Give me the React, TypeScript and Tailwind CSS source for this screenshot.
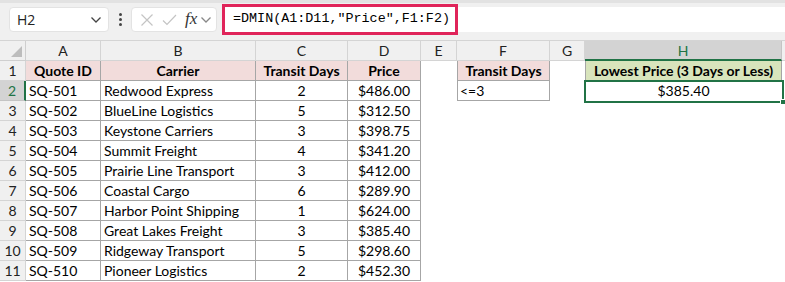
import React from 'react';

type Row = { id: string; carrier: string; days: string; price: string };

const rows: Row[] = [
  { id: 'SQ-501', carrier: 'Redwood Express', days: '2', price: '$486.00' },
  { id: 'SQ-502', carrier: 'BlueLine Logistics', days: '5', price: '$312.50' },
  { id: 'SQ-503', carrier: 'Keystone Carriers', days: '3', price: '$398.75' },
  { id: 'SQ-504', carrier: 'Summit Freight', days: '4', price: '$341.20' },
  { id: 'SQ-505', carrier: 'Prairie Line Transport', days: '3', price: '$412.00' },
  { id: 'SQ-506', carrier: 'Coastal Cargo', days: '6', price: '$289.90' },
  { id: 'SQ-507', carrier: 'Harbor Point Shipping', days: '1', price: '$624.00' },
  { id: 'SQ-508', carrier: 'Great Lakes Freight', days: '3', price: '$385.40' },
  { id: 'SQ-509', carrier: 'Ridgeway Transport', days: '5', price: '$298.60' },
  { id: 'SQ-510', carrier: 'Pioneer Logistics', days: '2', price: '$452.30' },
];

const cols = ['A', 'B', 'C', 'D', 'E', 'F', 'G', 'H'];

const cell = 'h-[20px] flex items-center text-[14px] leading-none text-black';
const tb = 'border-r border-b border-[#a6a6a6]';

const Chevron: React.FC<{ className?: string }> = ({ className }) => (
  <svg className={className} width="12" height="8" viewBox="0 0 12 8" fill="none">
    <path d="M1.5 1.5 L6 6 L10.5 1.5" stroke="currentColor" strokeWidth="1.3" />
  </svg>
);

const FormulaBar: React.FC = () => (
  <div className="relative h-[41px] bg-[#f0f0f0] border-b border-[#d4d4d4]">
    <div className="h-[3px] bg-[#e2e2e2]" />
    <div className="flex items-center h-[31px] pt-[2px]">
      <div className="ml-[9px] w-[100px] h-[25px] bg-white rounded-[4px] border border-[#e3e3e3] flex items-center justify-between pl-[7px] pr-[6px]">
        <span className="text-[14px] text-[#222] font-['Open_Sans',sans-serif]">H2</span>
        <Chevron className="text-[#444]" />
      </div>
      <div className="w-[22px] flex flex-col items-center gap-[2px]">
        <span className="w-[3px] h-[3px] rounded-full bg-[#444]" />
        <span className="w-[3px] h-[3px] rounded-full bg-[#444]" />
        <span className="w-[3px] h-[3px] rounded-full bg-[#444]" />
      </div>
      <div className="w-[86px] h-[25px] bg-white rounded-[4px] border border-[#e3e3e3] flex items-center pl-[8px] gap-[8px]">
        <svg width="14" height="14" viewBox="0 0 14 14" fill="none">
          <path d="M1.5 1.5 L12.5 12.5 M12.5 1.5 L1.5 12.5" stroke="#c4c4c4" strokeWidth="1.2" />
        </svg>
        <svg width="15" height="14" viewBox="0 0 15 14" fill="none">
          <path d="M1 7.5 L5 11.5 L14 2" stroke="#c4c4c4" strokeWidth="1.2" />
        </svg>
        <span className="text-[17px] italic text-[#333] font-['Liberation_Serif',serif] leading-none -mt-[2px]">fx</span>
        <Chevron className="text-[#888] -ml-[5px]" />
      </div>
      <div className="ml-[6px] flex-1 h-[25px] bg-white rounded-l-[4px] flex items-center pl-[10px]">
        <span className="text-[13.4px] text-black font-['Liberation_Mono',monospace]">
          =DMIN(A1:D11,"Price",F1:F2)
        </span>
      </div>
    </div>
    <div className="absolute left-[222px] top-[4px] w-[236px] h-[31px] border-[3px] border-[#e0245a]" />
  </div>
);

const App: React.FC = () => {
  return (
    <div className="w-[785px] h-[282px] overflow-hidden bg-white font-['Lato',sans-serif]">
      <FormulaBar />
      <div className="relative grid grid-cols-[26px_75px_155px_92px_73px_36px_93px_35px_197px_1fr]">
        {/* column headers */}
        <div className="h-[20px] bg-[#f0f0f0] border-r border-b border-[#cfcfcf] flex items-end justify-end p-[3px]">
          <svg width="11" height="11" viewBox="0 0 11 11">
            <path d="M11 0 L11 11 L0 11 Z" fill="#bdbdbd" />
          </svg>
        </div>
        {cols.map((c) =>
          c === 'H' ? (
            <div
              key={c}
              className="h-[20px] bg-[#d3d3d3] border-r border-[#c4c4c4] border-b-2 border-b-[#217346] flex items-center justify-center text-[14px] text-[#217346]"
            >
              {c}
            </div>
          ) : (
            <div
              key={c}
              className="h-[20px] bg-[#f0f0f0] border-r border-b border-[#d4d4d4] flex items-center justify-center text-[14px] text-[#222]"
            >
              {c}
            </div>
          )
        )}
        <div className="h-[20px] bg-[#f0f0f0] border-b border-[#d4d4d4]" />

        {/* row 1 */}
        <div className="h-[20px] bg-[#f0f0f0] border-r border-b border-[#d4d4d4] flex items-center justify-center text-[14px] text-[#222]">
          1
        </div>
        <div className={`${cell} ${tb} justify-center font-bold bg-[#f2dcdb]`}>Quote ID</div>
        <div className={`${cell} ${tb} justify-center font-bold bg-[#f2dcdb]`}>Carrier</div>
        <div className={`${cell} ${tb} justify-center font-bold bg-[#f2dcdb]`}>Transit Days</div>
        <div className={`${cell} ${tb} justify-center font-bold bg-[#f2dcdb]`}>Price</div>
        <div className={cell} />
        <div className={`${cell} ${tb} border-l justify-center font-bold bg-[#f2dcdb]`}>Transit Days</div>
        <div className={cell} />
        <div className={`${cell} ${tb} border-l justify-center font-bold bg-[#d8e4bc]`}>
          Lowest Price (3 Days or Less)
        </div>
        <div className={cell} />

        {rows.map((r, i) => {
          const n = i + 2;
          const sel = n === 2;
          return (
            <React.Fragment key={r.id}>
              {sel ? (
                <div className="h-[20px] bg-[#d3d3d3] border-r-2 border-r-[#217346] border-b border-[#c4c4c4] flex items-center justify-center text-[14px] text-[#217346]">
                  {n}
                </div>
              ) : (
                <div className="h-[20px] bg-[#f0f0f0] border-r border-b border-[#d4d4d4] flex items-center justify-center text-[14px] text-[#222]">
                  {n}
                </div>
              )}
              <div className={`${cell} ${tb} pl-[3px]`}>{r.id}</div>
              <div className={`${cell} ${tb} pl-[3px]`}>{r.carrier}</div>
              <div className={`${cell} ${tb} justify-center`}>{r.days}</div>
              <div className={`${cell} ${tb} justify-center`}>{r.price}</div>
              <div className={cell} />
              {n === 2 ? (
                <div className={`${cell} ${tb} border-l pl-[2px]`}>&lt;=3</div>
              ) : (
                <div className={cell} />
              )}
              <div className={cell} />
              {n === 2 ? (
                <div className={`${cell} justify-center`}>$385.40</div>
              ) : (
                <div className={cell} />
              )}
              <div className={cell} />
            </React.Fragment>
          );
        })}

        {/* active cell H2 */}
        <div className="absolute left-[584px] top-[39px] w-[200px] h-[23px] border-2 border-[#217346] pointer-events-none">
          <div className="absolute -right-[4px] -bottom-[4px] w-[6px] h-[6px] bg-[#217346] border border-white" />
        </div>
      </div>
    </div>
  );
};

export default App;
